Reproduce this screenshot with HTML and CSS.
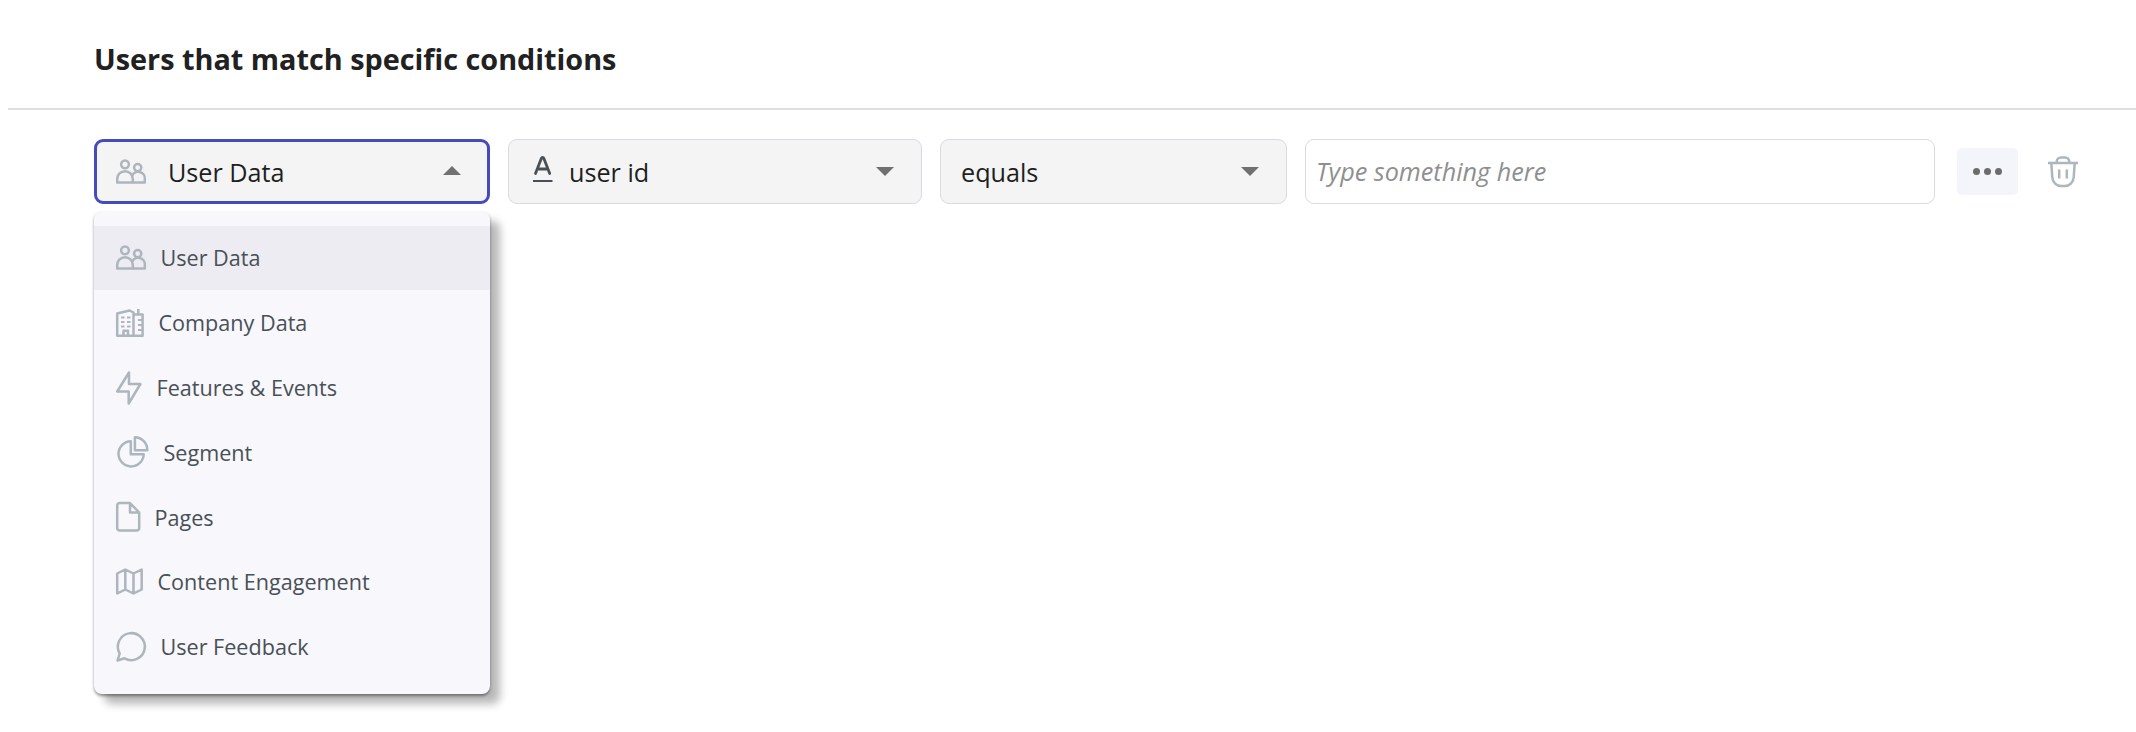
FILE: index.html
```html
<!DOCTYPE html>
<html lang="en">
<head>
  <meta charset="UTF-8">
  <title>Users that match specific conditions</title>
  <meta name="viewport" content="width=device-width, initial-scale=1">
  <link rel="stylesheet" href="styles.css">
</head>
<body>

  <!-- Shared icons -->
  <svg class="sprite" width="0" height="0">
    <symbol id="icon-users" viewBox="0 0 30 25">
      <circle cx="9" cy="5.3" r="3.9"/>
      <circle cx="21.7" cy="8.6" r="3.6"/>
      <path d="M1.2 23.5v-3.5a7.8 7.8 0 0 1 15.6 0v3.5z"/>
      <path d="M16 17.2a6.6 6.6 0 0 1 12.8 2.8v3.5H17"/>
    </symbol>
  </svg>

  <header class="header">
    <h2>Users that match specific conditions</h2>
  </header>

  <main class="condition">
    <div class="select-wrap">
      <div class="select select-type open">
        <svg class="icon" width="30" height="25"><use href="#icon-users"/></svg>
        <span>User Data</span>
        <i class="arrow up"></i>
      </div>

      <!-- Dropdown -->
      <ul class="menu">
        <li class="active">
          <svg class="icon" width="30" height="25"><use href="#icon-users"/></svg>
          <span>User Data</span>
        </li>
        <li>
          <svg class="icon" width="28" height="28" viewBox="0 0 28 28">
            <path d="M1.2 26.8V4.5L13.5 1.5l4 2V26.8zM17.5 5.5H26.600v21.3h-9.100M22.3 0v5.5M7.5 26.8v-5h4.5v5"/>
            <path class="thin" d="M5 8.5h3.5M11 8.5h3.5M5 13h3.5M11 13h3.5M5 17.5h3.5M11 17.5h3.5M22 11h4M22 16h4M22 21h4"/>
          </svg>
          <span>Company Data</span>
        </li>
        <li>
          <svg class="icon" width="26" height="34" viewBox="0 0 26 34">
            <path d="M13 1.5L1.2 20.5h11.5v12L24.4 13H13z"/>
          </svg>
          <span>Features &amp; Events</span>
        </li>
        <li>
          <svg class="icon" width="33" height="32" viewBox="0 0 33 32">
            <path d="M14.8 5.2A12.6 12.6 0 1 0 27.7 18.2H14.8z"/>
            <path d="M18.9 1.3v12.9h12.4A12.6 12.6 0 0 0 18.9 1.3z"/>
          </svg>
          <span>Segment</span>
        </li>
        <li>
          <svg class="icon" width="24" height="30" viewBox="0 0 24 30">
            <path d="M14 1H3.7A2.5 2.5 0 0 0 1.2 3.5V26a2.5 2.5 0 0 0 2.5 2.5H20.7A2.5 2.5 0 0 0 23.2 26V10.5zM14 1v9.5h9"/>
          </svg>
          <span>Pages</span>
        </li>
        <li>
          <svg class="icon" width="27" height="27" viewBox="0 0 27 27">
            <path d="M1.2 5.5L9.3 1.5 17.5 5.5 25.7 1.5V21.5L17.5 25.5 9.3 21.5 1.2 25.5zM9.3 1.5v20M17.5 5.5v20"/>
          </svg>
          <span>Content Engagement</span>
        </li>
        <li>
          <svg class="icon" width="30" height="31" viewBox="0 0 30 31">
            <path d="M1.5 29.5L3.7 22.5A13.5 13.5 0 1 1 8.5 27.3z"/>
          </svg>
          <span>User Feedback</span>
        </li>
      </ul>
    </div>

    <div class="select select-field">
      <svg class="icon icon-text" width="20" height="26" viewBox="0 0 20 26">
        <path class="letter" d="M2.5 17.5L8.4 2.3a1.3 1.3 0 0 1 2.4 0L16.7 17.5M4.5 13h10.2"/>
        <path d="M0 25h19.5"/>
      </svg>
      <span>user id</span>
      <i class="arrow"></i>
    </div>

    <div class="select select-operator">
      <span>equals</span>
      <i class="arrow"></i>
    </div>

    <input class="value" type="text" placeholder="Type something here">

    <button class="more" title="More">
      <i></i><i></i><i></i>
    </button>

    <button class="delete" title="Delete">
      <svg class="icon" width="30" height="32" viewBox="0 0 30 32">
        <path d="M0 7h30M8.5 7c0-3.5 2-5.5 4.5-5.5h4c2.5 0 4.5 2 4.5 5.5M3.3 7l1 14.5a9 9 0 0 0 9 8.5h3.4a9 9 0 0 0 9-8.5L26.7 7M11.2 13.5v9M18.8 13.5v9"/>
      </svg>
    </button>
  </main>

</body>
</html>
```
FILE: styles.css
```css
* {
  box-sizing: border-box;
}

body {
  margin: 0;
  min-height: 100vh;
  background: #fff;
  font-family: "Open Sans", sans-serif;
  color: #1f1f1f;
}

.sprite {
  display: block;
}

.header {
  height: 110px;
  margin-left: 8px;
  padding: 0 86px;
  display: flex;
  align-items: center;
  border-bottom: 2px solid #dedede;
}

h2 {
  margin: 10px 0 0;
  font-size: 28.8px;
  line-height: 40px;
  font-weight: 700;
  color: #212121;
}

.condition {
  display: flex;
  align-items: center;
  padding: 29px 0 0 94px;
}

/* Selects */
.select-wrap {
  position: relative;
  margin-right: 18px;
}

.select {
  height: 65px;
  display: flex;
  align-items: center;
  border: 1px solid #d9d9e8;
  border-radius: 9px;
  background: #f4f4f4;
  font-size: 25.2px;
}

.select-type {
  width: 396px;
  padding: 0 26px 0 19px;
  gap: 22px;
}

.select-field {
  width: 414px;
  padding: 0 27px 0 24px;
  gap: 16px;
  margin-right: 18px;
}

.select-operator {
  width: 347px;
  padding: 0 27px 0 20px;
  margin-right: 18px;
}

.select.open {
  border: 3px solid #464bbb;
}

.arrow {
  margin-left: auto;
  border: 9px solid transparent;
  border-top-color: #707070;
  border-bottom: 0;
}

.arrow.up {
  border-top: 0;
  border-bottom: 9px solid #707070;
  margin-bottom: 3px;
}

.icon {
  flex: none;
  overflow: visible;
  fill: none;
  stroke: #adb5bd;
  stroke-width: 2.5;
  stroke-linejoin: round;
}

.icon .thin {
  stroke-width: 2;
}

.icon-text {
  stroke: #495057;
  stroke-width: 2;
  margin-bottom: 6px;
}

.icon-text .letter {
  stroke-width: 2.8;
  stroke-linecap: round;
}

/* Dropdown */
.menu {
  position: absolute;
  top: 72px;
  left: 0;
  z-index: 10;
  width: 396px;
  height: 483px;
  margin: 0;
  padding: 14.6px 0 0;
  list-style: none;
  border-radius: 8px;
  background: #f7f7fc;
  box-shadow: 0 2px 3px rgba(0,0,0,0.4), 10px 10px 8px rgba(0,0,0,0.28);
}

.menu li {
  height: 64.8px;
  display: flex;
  align-items: center;
  gap: 14.5px;
  padding-left: 22px;
  font-size: 21.6px;
  color: #495057;
}

.menu li.active {
  background: #edecf2;
}

/* Value and actions */
.value {
  width: 630px;
  height: 65px;
  padding: 0 10px 2px;
  border: 1px solid #d9d9e8;
  border-radius: 9px;
  background: #fff;
  font-family: inherit;
  font-size: 25.2px;
  outline: none;
}

.value::placeholder {
  color: #8f8f8f;
  font-style: italic;
}

.more {
  width: 61px;
  height: 47px;
  margin-left: 22px;
  padding: 0;
  display: flex;
  align-items: center;
  justify-content: center;
  gap: 4px;
  border: none;
  border-radius: 5px;
  background: #f4f5fa;
}

.more i {
  width: 7px;
  height: 7px;
  border-radius: 50%;
  background: #6c6c6c;
}

.delete {
  margin-left: 30px;
  padding: 0;
  display: flex;
  border: none;
  background: none;
}
```
